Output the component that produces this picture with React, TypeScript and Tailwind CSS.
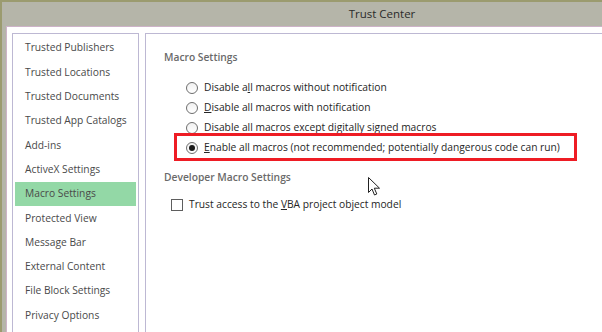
import React from "react";

const navItems = [
  "Trusted Publishers",
  "Trusted Locations",
  "Trusted Documents",
  "Trusted App Catalogs",
  "Add-ins",
  "ActiveX Settings",
  "Macro Settings",
  "Protected View",
  "Message Bar",
  "External Content",
  "File Block Settings",
  "Privacy Options",
];

function Radio({ checked }: { checked?: boolean }) {
  return (
    <span className="flex h-[12px] w-[12px] shrink-0 items-center justify-center rounded-full border border-[#6e6e6e] bg-gradient-to-b from-[#f0f0f0] to-white">
      {checked && <span className="h-[6px] w-[6px] rounded-full bg-[#1a1a1a]" />}
    </span>
  );
}

function RadioRow({ checked, children }: { checked?: boolean; children: React.ReactNode }) {
  return (
    <div className="flex h-[20px] items-center gap-[6px] pl-[22px]">
      <Radio checked={checked} />
      <span className="whitespace-nowrap">{children}</span>
    </div>
  );
}

export default function App() {
  return (
    <div
      className="relative h-[332px] w-[602px] overflow-hidden border-l-2 border-t-2 border-[#9b9b6f] bg-[#b5b5a9] text-[10.25px] text-[#262626]"
      style={{ fontFamily: '"Open Sans", "Noto Sans", sans-serif' }}
    >
      <div className="flex h-[24px] items-center justify-center pl-[160px] text-[11.5px] text-[#2b2b2b]">
        Trust Center
      </div>
      <div className="ml-[4px] h-full border-l border-t border-[#cdb3c8] bg-white pl-[5px] pt-[6px]">
        <div className="flex h-full gap-[6px]">
          <div className="h-full w-[127px] shrink-0 border-l border-r border-t border-[#bdb8d3] px-[2px] pt-[2px]">
            {navItems.map((item) => (
              <div
                key={item}
                className={
                  "flex h-[24.3px] items-center whitespace-nowrap pl-[10px] text-[#4a4a4a] " +
                  (item === "Macro Settings" ? "bg-[#93d8a6]" : "")
                }
              >
                {item}
              </div>
            ))}
          </div>
          <div className="relative h-full min-w-0 flex-1 border-l border-t border-[#bdb8d3] pl-[18px] pt-[15px]">
            <div className="h-[16px] font-semibold leading-[16px] text-[#6a6a6a]">Macro Settings</div>
            <div className="mt-[12.5px] flex flex-col">
              <RadioRow>
                Disable a<u>l</u>l macros without notification
              </RadioRow>
              <RadioRow>
                <u>D</u>isable all macros with notification
              </RadioRow>
              <RadioRow>Disable all macros except digitally signed macros</RadioRow>
              <RadioRow checked>
                <u>E</u>nable all macros (not recommended; potentially dangerous code can run)
              </RadioRow>
            </div>
            <div className="mt-[11.5px] h-[16px] font-semibold leading-[16px] text-[#6a6a6a]">
              Developer Macro Settings
            </div>
            <div className="mt-[11.5px] flex h-[16px] items-center gap-[6px] pl-[7px]">
              <span className="h-[12px] w-[12px] shrink-0 border border-[#5e5e5e] bg-white" />
              <span className="whitespace-nowrap">
                Trust access to the <u>V</u>BA project object model
              </span>
            </div>

            <div className="pointer-events-none absolute left-[28px] top-[99px] h-[28px] w-[403px] border-[3px] border-[#ee1c24]" />

            <svg
              className="absolute left-[222px] top-[143px]"
              width="13"
              height="19"
              viewBox="0 0 13 19"
            >
              <path
                d="M0.5 0.5 L0.5 15.5 L4 12 L6.5 18 L8.8 17 L6.3 11.2 L11.5 11.2 Z"
                fill="white"
                stroke="#222"
                strokeWidth="1"
                strokeLinejoin="round"
              />
            </svg>
          </div>
        </div>
      </div>
    </div>
  );
}
